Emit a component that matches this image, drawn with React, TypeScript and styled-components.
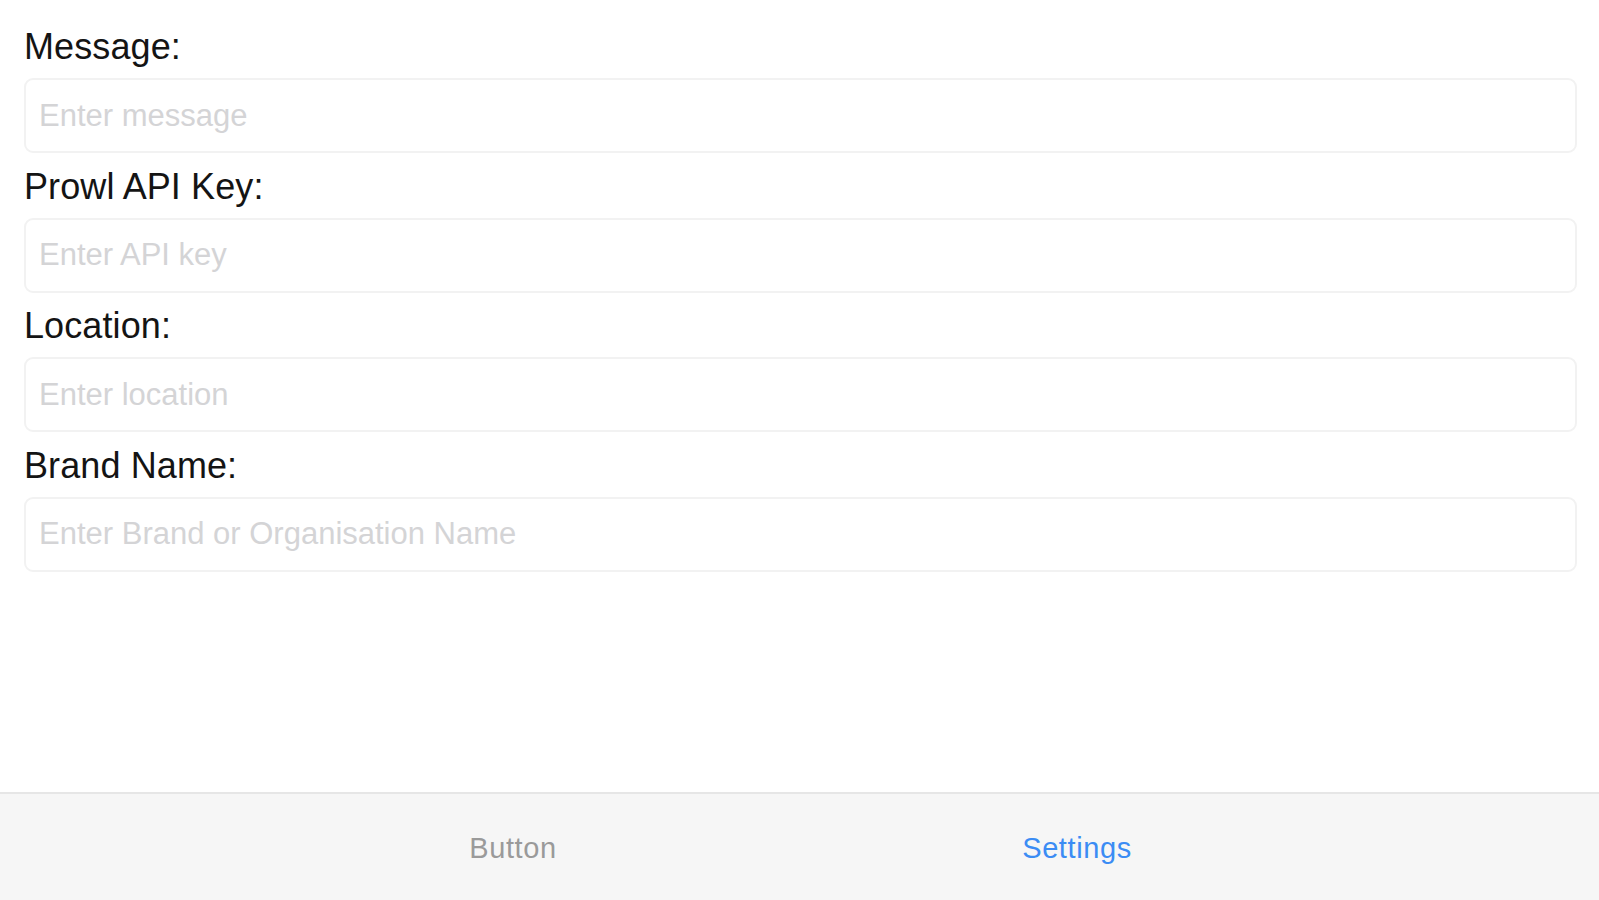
import React from "react";
import styled, { createGlobalStyle } from "styled-components";

const Global = createGlobalStyle`
  html, body { margin: 0; padding: 0; background: #ffffff; }
  body { font-family: "Liberation Sans", Arial, sans-serif; }
  * { box-sizing: border-box; }
`;

const Screen = styled.div`
  display: flex;
  flex-direction: column;
  width: 100%;
  height: 100vh;
  background: #ffffff;
`;

const Form = styled.div`
  flex: 1;
  display: flex;
  flex-direction: column;
  padding: 27px 22px 0 24px;
`;

const Field = styled.div`
  display: flex;
  flex-direction: column;
  margin-bottom: 13.5px;
`;

const Label = styled.label`
  font-size: 36px;
  line-height: 40px;
  height: 40px;
  color: #141414;
  margin-bottom: 11px;
  letter-spacing: 0.1px;
`;

const Input = styled.input`
  height: 75px;
  width: 100%;
  border: 2px solid #f2f2f2;
  border-radius: 9px;
  background: #ffffff;
  padding: 0 13px;
  font-family: "Liberation Sans", Arial, sans-serif;
  font-size: 31px;
  color: #222;
  outline: none;
  &::placeholder {
    color: #d4d4d6;
  }
`;

const TabBar = styled.nav`
  height: 108px;
  flex-shrink: 0;
  display: flex;
  background: #f6f6f6;
  border-top: 2px solid #e6e6e6;
  padding: 0 240px 0 231px;
`;

const TabItem = styled.div<{ $active?: boolean }>`
  width: 564px;
  display: flex;
  align-items: center;
  justify-content: center;
  padding-top: 2px;
  font-size: 29px;
  letter-spacing: 0.6px;
  color: ${(p) => (p.$active ? "#3b8cf4" : "#9a9a9a")};
`;

const fields = [
  { label: "Message:", placeholder: "Enter message" },
  { label: "Prowl API Key:", placeholder: "Enter API key" },
  { label: "Location:", placeholder: "Enter location" },
  { label: "Brand Name:", placeholder: "Enter Brand or Organisation Name" },
];

export default function App() {
  return (
    <Screen>
      <Global />
      <Form>
        {fields.map((f) => (
          <Field key={f.label}>
            <Label>{f.label}</Label>
            <Input placeholder={f.placeholder} />
          </Field>
        ))}
      </Form>
      <TabBar>
        <TabItem>Button</TabItem>
        <TabItem $active>Settings</TabItem>
      </TabBar>
    </Screen>
  );
}
